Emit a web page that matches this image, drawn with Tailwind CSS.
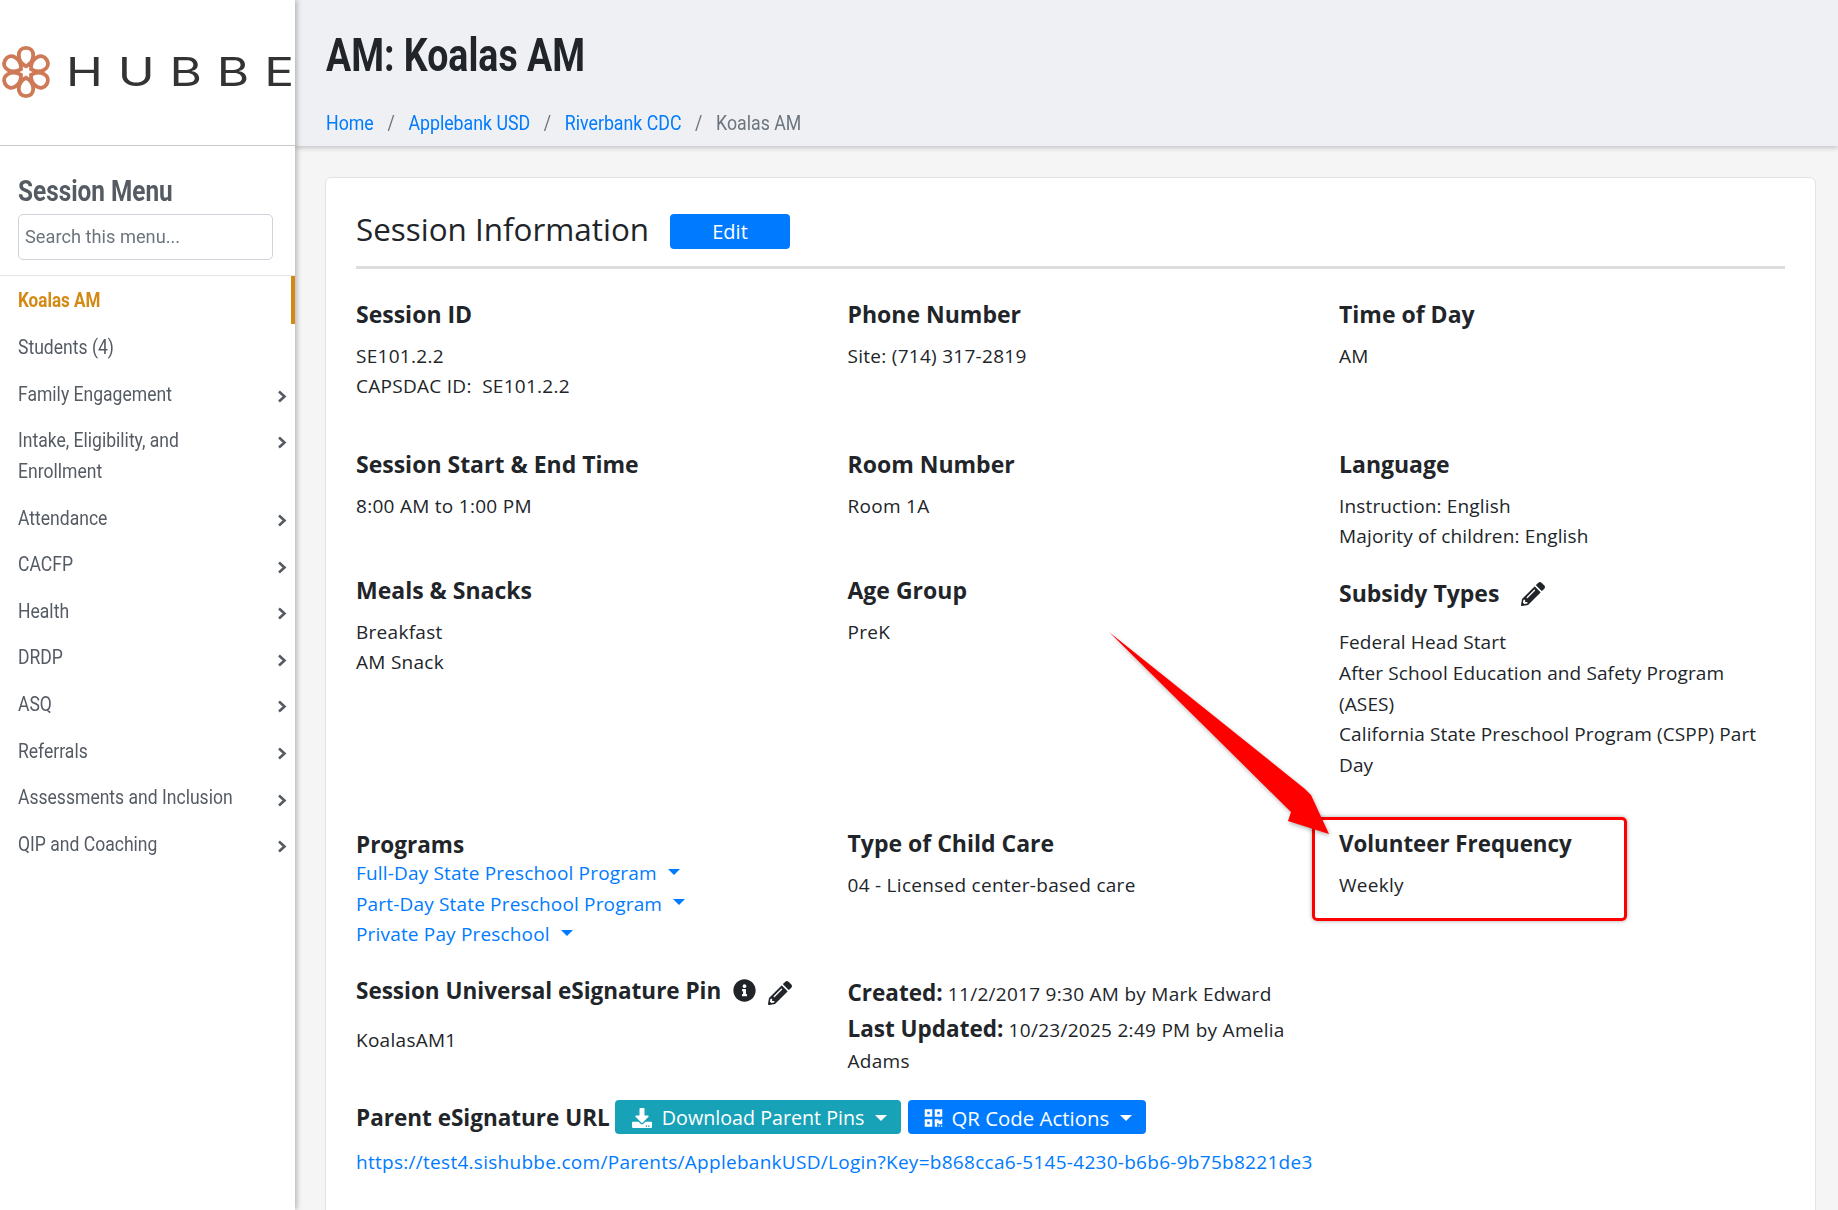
<!DOCTYPE html>
<html><head><meta charset="utf-8"><script src="https://cdn.jsdelivr.net/npm/@tailwindcss/browser@4"></script></head>
<body class="m-0">
<div class="relative flex w-[1838px] h-[1210px] overflow-hidden bg-[#f5f5f5] font-['Open_Sans',sans-serif] text-[#212529]">
  <aside class="relative z-10 w-[295px] shrink-0 bg-white shadow-[2px_0_5px_rgba(0,0,0,0.25)] font-['Roboto',sans-serif]">
    <div class="flex items-center h-[146px] border-b border-[#c8c8c8] pb-[2px]">
      <svg width="52" height="54" viewBox="-27 -27 54 54" class="shrink-0" fill="none" stroke="#cf7a56" stroke-width="4">
        <path d="M0 -6C-10 -11 -10 -25 0 -25C10 -25 10 -11 0 -6Z"/>
        <path transform="rotate(60)" d="M0 -6C-10 -11 -10 -25 0 -25C10 -25 10 -11 0 -6Z"/>
        <path transform="rotate(120)" d="M0 -6C-10 -11 -10 -25 0 -25C10 -25 10 -11 0 -6Z"/>
        <path transform="rotate(180)" d="M0 -6C-10 -11 -10 -25 0 -25C10 -25 10 -11 0 -6Z"/>
        <path transform="rotate(240)" d="M0 -6C-10 -11 -10 -25 0 -25C10 -25 10 -11 0 -6Z"/>
        <path transform="rotate(300)" d="M0 -6C-10 -11 -10 -25 0 -25C10 -25 10 -11 0 -6Z"/>
      </svg>
      <span class="ml-[14px] font-['Inter',sans-serif] text-[40px] leading-none text-[#333] tracking-[12px] whitespace-nowrap origin-left scale-x-[1.24]">HUBBE</span>
    </div>
    <div class="px-[18px] pt-[29px] pb-[15px] border-b border-[#e6e6e6]">
      <h2 class="text-[29.5px] leading-[33px] font-bold text-[#555b63] origin-left scale-x-[.825] whitespace-nowrap">Session Menu</h2>
      <div class="mt-[6px] h-[46px] w-[255px] rounded-[5px] border border-[#ced4da] flex items-center px-[6px] text-[19px] text-[#6c757d]"><span class="origin-left scale-x-[.96] whitespace-nowrap">Search this menu...</span></div>
    </div>
    <nav class="pt-[1px] text-[19.5px] text-[#555b63]">
      <div class="relative h-[48px] flex items-center px-[18px] font-bold text-[#d38a14]"><span class="origin-left scale-x-[.875]">Koalas AM</span><span class="absolute right-0 top-[-1px] h-[48px] w-[4px] bg-[#d38a14]"></span></div>
      <div class="h-[46px] flex items-center px-[18px]"><span class="origin-left scale-x-[.9]">Students (4)</span></div>
      <div class="h-[47px] flex items-center justify-between pl-[18px] pr-[8px]"><span class="origin-left scale-x-[.9]">Family Engagement</span><svg width="10" height="13" viewBox="0 0 10 13" class="mt-[4px] shrink-0"><path d="M2 1.500L7.500 6.500L2 11.500" fill="none" stroke="#555b63" stroke-width="2.600"/></svg></div>
      <div class="h-[77px] flex items-start justify-between pl-[18px] pr-[8px] pt-[7px] leading-[31px]"><span class="origin-left scale-x-[.9] whitespace-nowrap">Intake, Eligibility, and<br>Enrollment</span><svg width="10" height="13" viewBox="0 0 10 13" class="mt-[11px] shrink-0"><path d="M2 1.500L7.500 6.500L2 11.500" fill="none" stroke="#555b63" stroke-width="2.600"/></svg></div>
      <div class="h-[47px] flex items-center justify-between pl-[18px] pr-[8px]"><span class="origin-left scale-x-[.9]">Attendance</span><svg width="10" height="13" viewBox="0 0 10 13" class="mt-[4px] shrink-0"><path d="M2 1.500L7.500 6.500L2 11.500" fill="none" stroke="#555b63" stroke-width="2.600"/></svg></div>
      <div class="h-[46px] flex items-center justify-between pl-[18px] pr-[8px]"><span class="origin-left scale-x-[.9]">CACFP</span><svg width="10" height="13" viewBox="0 0 10 13" class="mt-[4px] shrink-0"><path d="M2 1.500L7.500 6.500L2 11.500" fill="none" stroke="#555b63" stroke-width="2.600"/></svg></div>
      <div class="h-[47px] flex items-center justify-between pl-[18px] pr-[8px]"><span class="origin-left scale-x-[.9]">Health</span><svg width="10" height="13" viewBox="0 0 10 13" class="mt-[4px] shrink-0"><path d="M2 1.500L7.500 6.500L2 11.500" fill="none" stroke="#555b63" stroke-width="2.600"/></svg></div>
      <div class="h-[46px] flex items-center justify-between pl-[18px] pr-[8px]"><span class="origin-left scale-x-[.9]">DRDP</span><svg width="10" height="13" viewBox="0 0 10 13" class="mt-[4px] shrink-0"><path d="M2 1.500L7.500 6.500L2 11.500" fill="none" stroke="#555b63" stroke-width="2.600"/></svg></div>
      <div class="h-[47px] flex items-center justify-between pl-[18px] pr-[8px]"><span class="origin-left scale-x-[.9]">ASQ</span><svg width="10" height="13" viewBox="0 0 10 13" class="mt-[4px] shrink-0"><path d="M2 1.500L7.500 6.500L2 11.500" fill="none" stroke="#555b63" stroke-width="2.600"/></svg></div>
      <div class="h-[47px] flex items-center justify-between pl-[18px] pr-[8px]"><span class="origin-left scale-x-[.9]">Referrals</span><svg width="10" height="13" viewBox="0 0 10 13" class="mt-[4px] shrink-0"><path d="M2 1.500L7.500 6.500L2 11.500" fill="none" stroke="#555b63" stroke-width="2.600"/></svg></div>
      <div class="h-[46px] flex items-center justify-between pl-[18px] pr-[8px]"><span class="origin-left scale-x-[.9] whitespace-nowrap">Assessments and Inclusion</span><svg width="10" height="13" viewBox="0 0 10 13" class="mt-[4px] shrink-0"><path d="M2 1.500L7.500 6.500L2 11.500" fill="none" stroke="#555b63" stroke-width="2.600"/></svg></div>
      <div class="h-[47px] flex items-center justify-between pl-[18px] pr-[8px]"><span class="origin-left scale-x-[.9]">QIP and Coaching</span><svg width="10" height="13" viewBox="0 0 10 13" class="mt-[4px] shrink-0"><path d="M2 1.500L7.500 6.500L2 11.500" fill="none" stroke="#555b63" stroke-width="2.600"/></svg></div>
    </nav>
  </aside>
  <main class="flex-1 min-w-0">
    <header class="h-[146px] bg-[#eff0f4] shadow-[0_2px_5px_rgba(0,0,0,0.2)] pl-[31px] pt-[29px] font-['Roboto',sans-serif]">
      <h1 class="text-[46.5px] leading-[52px] font-bold text-[#212529] origin-left scale-x-[.806] whitespace-nowrap">AM: Koalas AM</h1>
      <div class="mt-[31px] flex text-[19.5px] leading-[24px] origin-left scale-x-[.91] whitespace-nowrap">
        <span class="text-[#007bff]">Home</span><span class="px-[15px] text-[#6c757d]">/</span>
        <span class="text-[#007bff]">Applebank USD</span><span class="px-[15px] text-[#6c757d]">/</span>
        <span class="text-[#007bff]">Riverbank CDC</span><span class="px-[15px] text-[#6c757d]">/</span>
        <span class="text-[#6c757d]">Koalas AM</span>
      </div>
    </header>
    <section class="ml-[30px] mr-[22px] mt-[31px] h-[1100px] rounded-[6px] border border-[#e3e3e3] bg-white px-[30px] pt-[25px]">
      <div class="flex items-center h-[66px] border-b-[3px] border-[#dddddd] pb-[12px]">
        <h2 class="text-[31.4px] leading-[36px] font-normal whitespace-nowrap">Session Information</h2>
        <span class="ml-[21px] mt-[5px] w-[120px] h-[35px] rounded-[4px] bg-[#007bff] text-white text-[20px] flex items-center justify-center pt-[2px]">Edit</span>
      </div>
      <div class="grid grid-cols-[491.500px_491.500px_1fr] grid-rows-[150px_126px_253px_148px_124px] pt-[30px] text-[19px] tracking-[0.28px] leading-[30px]">
        <div><h3 class="text-[23px] tracking-normal font-bold leading-[30px] mb-[12px]">Session ID</h3>SE101.2.2<br>CAPSDAC ID:&nbsp; SE101.2.2</div>
        <div><h3 class="text-[23px] tracking-normal font-bold leading-[30px] mb-[12px]">Phone Number</h3>Site: (714) 317-2819</div>
        <div><h3 class="text-[23px] tracking-normal font-bold leading-[30px] mb-[12px]">Time of Day</h3>AM</div>

        <div><h3 class="text-[23px] tracking-normal font-bold leading-[30px] mb-[12px]">Session Start &amp; End Time</h3>8:00 AM to 1:00 PM</div>
        <div><h3 class="text-[23px] tracking-normal font-bold leading-[30px] mb-[12px]">Room Number</h3>Room 1A</div>
        <div><h3 class="text-[23px] tracking-normal font-bold leading-[30px] mb-[12px]">Language</h3><div class="tracking-[0.15px]">Instruction: English<br>Majority of children: English</div></div>

        <div><h3 class="text-[23px] tracking-normal font-bold leading-[30px] mb-[12px]">Meals &amp; Snacks</h3>Breakfast<br>AM Snack</div>
        <div><h3 class="text-[23px] tracking-normal font-bold leading-[30px] mb-[12px]">Age Group</h3>PreK</div>
        <div>
          <h3 class="flex items-center text-[23px] tracking-normal font-bold leading-[30px] mt-[3px] mb-[19px]">Subsidy Types
            <svg class="ml-[22px] mt-[2px]" width="24" height="24" viewBox="0 0 512 512" fill="#212529"><path d="M497.900 142.100l-46.100 46.100c-4.700 4.700-12.300 4.700-17 0l-111-111c-4.700-4.700-4.700-12.300 0-17l46.100-46.100c18.700-18.700 49.100-18.700 67.900 0l60.100 60.100c18.800 18.700 18.800 49.100 0 67.900zM284.200 99.800L21.600 362.400.4 483.900c-2.900 16.400 11.400 30.600 27.800 27.800l121.500-21.300 262.600-262.600c4.700-4.700 4.700-12.300 0-17l-111-111c-4.800-4.700-12.400-4.700-17.100 0zM124.100 339.900c-5.500-5.500-5.500-14.300 0-19.800l154-154c5.500-5.500 14.300-5.500 19.800 0s5.500 14.300 0 19.800l-154 154c-5.500 5.500-14.300 5.500-19.800 0zM88 424h48v36.300l-64.500 11.300-31.100-31.100L51.700 376H88v48z"/></svg>
          </h3>
          <div class="leading-[30.800px] tracking-[0.12px]">Federal Head Start<br>After School Education and Safety Program<br>(ASES)<br>California State Preschool Program (CSPP) Part<br>Day</div>
        </div>

        <div class="pt-[2px]"><h3 class="text-[22.500px] tracking-normal font-bold leading-[30px] mb-[-2px]">Programs</h3>
          <div class="text-[#007bff] leading-[30.600px] tracking-[0.17px]">
            <div class="flex items-center">Full-Day State Preschool Program<i class="ml-[11px] w-0 h-0 border-x-[6px] border-x-transparent border-t-[6px] border-t-[#007bff] mb-[3px]"></i></div>
            <div class="flex items-center">Part-Day State Preschool Program<i class="ml-[11px] w-0 h-0 border-x-[6px] border-x-transparent border-t-[6px] border-t-[#007bff] mb-[3px]"></i></div>
            <div class="flex items-center">Private Pay Preschool<i class="ml-[11px] w-0 h-0 border-x-[6px] border-x-transparent border-t-[6px] border-t-[#007bff] mb-[3px]"></i></div>
          </div>
        </div>
        <div><h3 class="text-[23px] tracking-normal font-bold leading-[30px] mb-[12px]">Type of Child Care</h3>04 - Licensed center-based care</div>
        <div class="pt-[1px]"><h3 class="text-[22.300px] tracking-normal font-bold leading-[30px] mb-[11px]">Volunteer Frequency</h3>Weekly</div>

        <div>
          <h3 class="flex items-center text-[22.500px] tracking-normal font-bold leading-[30px] mb-[19px]">Session Universal eSignature Pin
            <svg class="ml-[12px] mb-[2px]" width="23" height="23" viewBox="0 0 512 512" fill="#212529"><path d="M256 8C119 8 8 119 8 256s111 248 248 248 248-111 248-248S393 8 256 8zm0 110c23.200 0 42 18.800 42 42s-18.800 42-42 42-42-18.800-42-42 18.800-42 42-42zm56 254c0 6.600-5.400 12-12 12h-88c-6.600 0-12-5.400-12-12v-24c0-6.600 5.400-12 12-12h12v-64h-12c-6.600 0-12-5.400-12-12v-24c0-6.600 5.400-12 12-12h64c6.600 0 12 5.400 12 12v100h12c6.600 0 12 5.400 12 12v24z"/></svg>
            <svg class="ml-[12px] mt-[4px]" width="24" height="24" viewBox="0 0 512 512" fill="#212529"><path d="M497.900 142.100l-46.100 46.100c-4.700 4.700-12.300 4.700-17 0l-111-111c-4.700-4.700-4.700-12.300 0-17l46.100-46.100c18.700-18.700 49.100-18.700 67.900 0l60.100 60.100c18.800 18.700 18.800 49.100 0 67.900zM284.200 99.800L21.600 362.400.4 483.900c-2.900 16.400 11.400 30.600 27.800 27.800l121.500-21.300 262.600-262.600c4.700-4.700 4.700-12.300 0-17l-111-111c-4.800-4.700-12.400-4.700-17.100 0zM124.100 339.900c-5.500-5.500-5.500-14.300 0-19.800l154-154c5.500-5.500 14.300-5.500 19.800 0s5.500 14.300 0 19.800l-154 154c-5.500 5.500-14.300 5.500-19.800 0zM88 424h48v36.300l-64.500 11.300-31.100-31.100L51.700 376H88v48z"/></svg>
          </h3>
          KoalasAM1
        </div>
        <div class="col-span-2 w-[470px] leading-[31px] pt-[1px]">
          <div><b class="text-[22.500px] tracking-normal">Created:</b> 11/2/2017 9:30 AM by Mark Edward</div>
          <div class="mt-[3px]"><b class="text-[22.500px] tracking-normal">Last Updated:</b> 10/23/2025 2:49 PM by Amelia Adams</div>
        </div>

        <div class="col-span-3">
          <div class="flex items-center h-[34px]">
            <h3 class="text-[22.500px] tracking-normal font-bold leading-[30px] whitespace-nowrap mt-[2px]">Parent eSignature URL</h3>
            <span class="ml-[5px] h-[34px] pl-[16px] pr-[14px] pt-[1px] rounded-[4px] bg-[#17a2b8] text-white text-[19.700px] tracking-normal flex items-center whitespace-nowrap">
              <svg width="22" height="20" viewBox="0 0 512 512" fill="#fff" class="mr-[9px]"><path d="M216 0h80c13.300 0 24 10.700 24 24v168h87.700c17.800 0 26.700 21.500 14.100 34.100L269.700 378.300c-7.500 7.500-19.800 7.500-27.300 0L90.100 226.100c-12.600-12.600-3.700-34.100 14.100-34.100H192V24c0-13.300 10.700-24 24-24zm296 376v112c0 13.300-10.700 24-24 24H24c-13.300 0-24-10.700-24-24V376c0-13.300 10.700-24 24-24h146.700l49 49c20.100 20.100 52.500 20.100 72.600 0l49-49H488c13.300 0 24 10.700 24 24zm-124 88c0-11-9-20-20-20s-20 9-20 20 9 20 20 20 20-9 20-20zm64 0c0-11-9-20-20-20s-20 9-20 20 9 20 20 20 20-9 20-20z"/></svg>
              Download Parent Pins<i class="ml-[10px] w-0 h-0 border-x-[6.500px] border-x-transparent border-t-[6.500px] border-t-white"></i>
            </span>
            <span class="ml-[7px] h-[34px] pl-[16px] pr-[14px] pt-[1px] rounded-[4px] bg-[#007bff] text-white text-[20.400px] tracking-normal flex items-center whitespace-nowrap">
              <svg width="19" height="20" viewBox="0 0 448 512" fill="#fff" class="mr-[9px]"><path d="M0 224h192V32H0v192zM64 96h64v64H64V96zm192-64v192h192V32H256zm128 128h-64V96h64v64zM0 480h192V288H0v192zm64-128h64v64H64v-64zm352-64h32v128h-96v-32h-32v96h-64V288h96v32h64v-32zm0 160h32v32h-32v-32zm-64 0h32v32h-32v-32z"/></svg>
              QR Code Actions<i class="ml-[11px] w-0 h-0 border-x-[6.500px] border-x-transparent border-t-[6.500px] border-t-white"></i>
            </span>
          </div>
          <div class="mt-[13px] text-[#007bff] whitespace-nowrap">https://test4.sishubbe.com/Parents/ApplebankUSD/Login?Key=b868cca6-5145-4230-b6b6-9b75b8221de3</div>
        </div>
      </div>
    </section>
  </main>
  <div class="absolute left-[1312px] top-[817px] w-[315px] h-[104px] rounded-[5px] border-[3px] border-[#f00] shadow-[0_0_4px_rgba(0,0,0,0.35)]"></div>
  <svg class="absolute left-[1100px] top-[620px] drop-shadow-[1px_2px_2px_rgba(0,0,0,0.3)]" width="240" height="220" viewBox="0 0 240 220"><path d="M9 12L205 169L211 175L229 214L188 201L191 192Z" fill="#ff0000"/></svg>
</div>
</body></html>
